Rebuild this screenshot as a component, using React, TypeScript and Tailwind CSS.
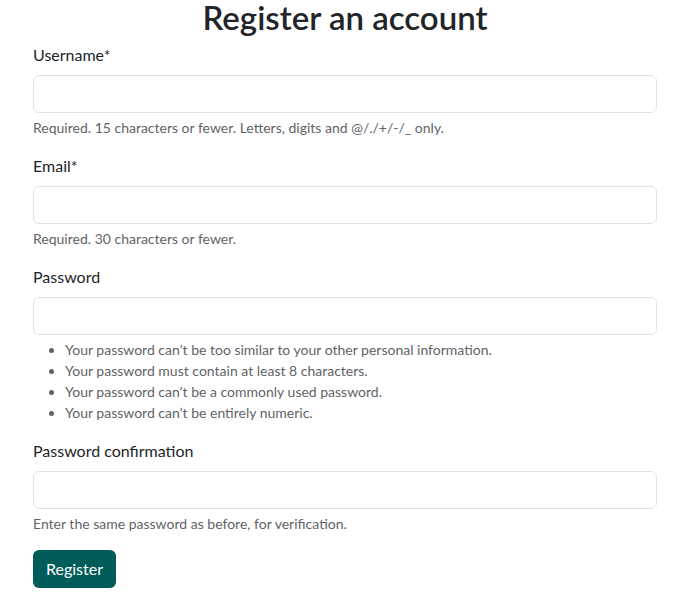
function Field({ label, help, children }: { label: string; help?: string; children?: React.ReactNode }) {
  return (
    <div className="mb-4">
      <label className="block mb-2 text-[16px] leading-6 text-[#212529]">{label}</label>
      <input
        type="text"
        className="block w-full h-[38px] px-3 border border-[#dee2e6] rounded-md bg-white outline-none"
      />
      {help && <div className="mt-1 text-[14px] leading-[21px] text-[#5f6368]">{help}</div>}
      {children}
    </div>
  )
}

export default function App() {
  return (
    <div className="min-h-screen bg-white font-['Lato',sans-serif]">
      <div className="w-[624px] ml-[33px]">
        <h1 className="mb-[9px] text-center text-[33px] leading-[34px] font-semibold text-[#212529]">
          Register an account
        </h1>
        <form>
          <Field label="Username*" help="Required. 15 characters or fewer. Letters, digits and @/./+/-/_ only." />
          <Field label="Email*" help="Required. 30 characters or fewer." />
          <Field label="Password">
            <ul className="mt-1 pl-8 list-disc text-[14px] leading-[21px] text-[#5f6368]">
              <li>Your password can’t be too similar to your other personal information.</li>
              <li>Your password must contain at least 8 characters.</li>
              <li>Your password can’t be a commonly used password.</li>
              <li>Your password can’t be entirely numeric.</li>
            </ul>
          </Field>
          <Field label="Password confirmation" help="Enter the same password as before, for verification." />
          <button
            type="submit"
            className="h-[38px] px-[13px] rounded-md bg-[#005c58] text-white text-[16px] leading-6"
          >
            Register
          </button>
        </form>
      </div>
    </div>
  )
}
